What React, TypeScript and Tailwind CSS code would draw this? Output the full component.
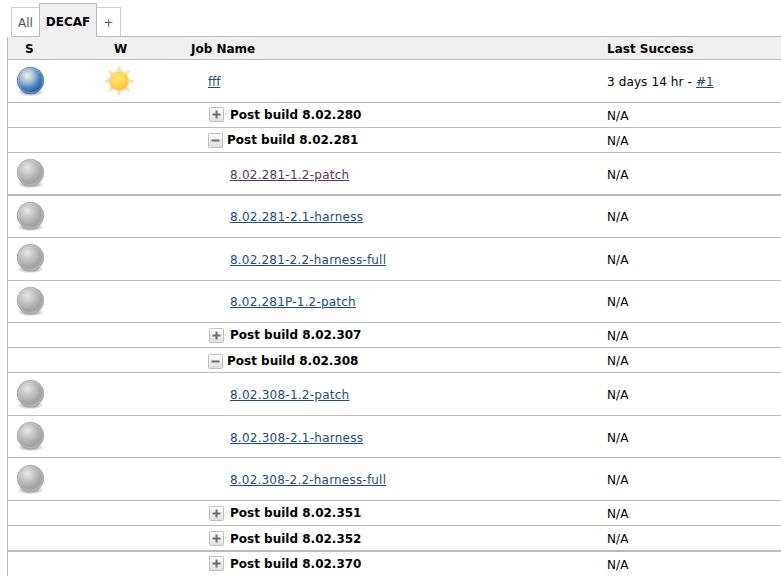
import React from "react";

type Row = {
  kind: "job" | "plus" | "minus";
  name: string;
  h: string;
  icon: string;
  label: string;
  last: string;
  track?: string;
  root?: boolean;
  visited?: boolean;
};

const rows: Row[] = [
  { kind: "job", name: "fff", h: "h-[43px] border-b", icon: "pt-[5px]", label: "pt-3.5", last: "pt-3.5", track: "-tracking-[0.1px]", root: true },
  { kind: "plus", name: "Post build 8.02.280", h: "h-[25px] border-b", icon: "pt-1", label: "pt-1", last: "pt-[5px]" },
  { kind: "minus", name: "Post build 8.02.281", h: "h-[25px] border-b", icon: "pt-[5px]", label: "pt-1", last: "pt-[5px]" },
  { kind: "job", name: "8.02.281-1.2-patch", h: "h-[43px] border-b-2", icon: "pt-1", label: "pt-3.5", last: "pt-3.5", visited: true },
  { kind: "job", name: "8.02.281-2.1-harness", h: "h-[42px] border-b", icon: "pt-1", label: "pt-[13px]", last: "pt-[13px]" },
  { kind: "job", name: "8.02.281-2.2-harness-full", h: "h-[43px] border-b", icon: "pt-1", label: "pt-3.5", last: "pt-3.5", track: "tracking-[0.2px]" },
  { kind: "job", name: "8.02.281P-1.2-patch", h: "h-[42px] border-b", icon: "pt-1", label: "pt-[13px]", last: "pt-[13px]", track: "tracking-[0.2px]" },
  { kind: "plus", name: "Post build 8.02.307", h: "h-[25px] border-b", icon: "pt-[5px]", label: "pt-1", last: "pt-[5px]" },
  { kind: "minus", name: "Post build 8.02.308", h: "h-[25px] border-b", icon: "pt-1.5", label: "pt-[5px]", last: "pt-[5px]" },
  { kind: "job", name: "8.02.308-1.2-patch", h: "h-[43px] border-b", icon: "pt-[5px]", label: "pt-3.5", last: "pt-3.5" },
  { kind: "job", name: "8.02.308-2.1-harness", h: "h-[42px] border-b", icon: "pt-1", label: "pt-3.5", last: "pt-3.5" },
  { kind: "job", name: "8.02.308-2.2-harness-full", h: "h-[43px] border-b", icon: "pt-[5px]", label: "pt-3.5", last: "pt-3.5", track: "tracking-[0.2px]" },
  { kind: "plus", name: "Post build 8.02.351", h: "h-[25px] border-b", icon: "pt-[5px]", label: "pt-1", last: "pt-[5px]" },
  { kind: "plus", name: "Post build 8.02.352", h: "h-[26px] border-b-2", icon: "pt-[5px]", label: "pt-[5px]", last: "pt-[5px]" },
  { kind: "plus", name: "Post build 8.02.370", h: "h-[25px]", icon: "pt-1", label: "pt-1", last: "pt-[5px]" },
];

function Gradients() {
  return (
    <svg width="0" height="0" className="absolute">
      <defs>
        <radialGradient id="blue" cx="0.38" cy="0.32" r="0.68">
          <stop offset="0" stopColor="#f0f4dc" />
          <stop offset="0.35" stopColor="#a9c3d9" />
          <stop offset="0.7" stopColor="#4a80bb" />
          <stop offset="1" stopColor="#2459a0" />
        </radialGradient>
        <radialGradient id="grey" cx="0.38" cy="0.32" r="0.68">
          <stop offset="0" stopColor="#e8e8e8" />
          <stop offset="0.4" stopColor="#c4c4c4" />
          <stop offset="0.8" stopColor="#a2a2a2" />
          <stop offset="1" stopColor="#a8a8a8" />
        </radialGradient>
        <radialGradient id="shade">
          <stop offset="0.4" stopColor="#777" stopOpacity="0.7" />
          <stop offset="1" stopColor="#999" stopOpacity="0" />
        </radialGradient>
        <radialGradient id="sun" cx="0.4" cy="0.35" r="0.7">
          <stop offset="0" stopColor="#ffe873" />
          <stop offset="0.6" stopColor="#ffd747" />
          <stop offset="1" stopColor="#fbb440" />
        </radialGradient>
        <linearGradient id="button" x1="0" y1="0" x2="0" y2="1">
          <stop offset="0" stopColor="#fff" />
          <stop offset="1" stopColor="#dedede" />
        </linearGradient>
      </defs>
    </svg>
  );
}

function Ball({ blue }: { blue?: boolean }) {
  return (
    <svg width="32" height="32" viewBox="0 0 32 32" className="block">
      <ellipse cx="16.5" cy="27.2" rx="13.5" ry="4.2" fill="url(#shade)" />
      <circle cx="16.5" cy="15.5" r="13.3" fill={blue ? "url(#blue)" : "url(#grey)"} stroke={blue ? "#5684b6" : "#a2a2a2"} strokeWidth="0.8" />
      <circle cx="16.5" cy="15.5" r="12.3" fill="none" stroke={blue ? "#a9c7e5" : "#cccccc"} strokeOpacity="0.6" strokeWidth="0.8" />
    </svg>
  );
}

const rays = [0, 45, 90, 135, 180, 225, 270, 315];

function Sun() {
  return (
    <svg width="32" height="32" viewBox="0 0 32 32" className="block">
      {rays.map((a) => (
        <path key={a} d="M16 0 L19.2 8.6 L12.8 8.6 Z" fill="#fbdfa6" transform={`rotate(${a} 16 16)`} />
      ))}
      <circle cx="16" cy="16" r="9.2" fill="url(#sun)" stroke="#f7c873" strokeWidth="0.9" />
    </svg>
  );
}

function Toggle({ plus }: { plus: boolean }) {
  return (
    <svg width="18" height="15" viewBox="0 0 18 15" className="block shrink-0">
      <rect x="0.5" y="0.5" width="14" height="14" rx="1" fill="url(#button)" stroke="#bfbfbf" />
      <path d="M3.5 7.5h8" stroke="#6c6c6c" strokeWidth="2" />
      {plus && <path d="M7.5 3.5v8" stroke="#6c6c6c" strokeWidth="2" />}
      {plus && <path d="M16 7h1" stroke="#b8cadb" />}
    </svg>
  );
}

function JobRow({ row }: { row: Row }) {
  const job = row.kind === "job";
  return (
    <div className={`flex shrink-0 items-start border-[#bbb] ${row.h}`}>
      <div className={`w-[84px] pl-1.5 ${row.icon}`}>{job && <Ball blue={row.root} />}</div>
      <div className="w-[99px] pl-[11px] pt-[5px]">{row.root && <Sun />}</div>
      <div className="flex w-[416px] items-start">
        {job ? (
          <div className={`${row.label} ${row.root ? "pl-[17px]" : "pl-[39px]"}`}>
            <a
              className={`underline underline-offset-1 ${row.track ?? "tracking-[0.24px]"} ${
                row.visited ? "text-[#5c3566]" : "text-[#204a87]"
              }`}
            >
              {row.name}
            </a>
          </div>
        ) : (
          <div className={`flex items-start ${row.kind === "plus" ? "gap-[3px] pl-[18px]" : "gap-px pl-[17px]"}`}>
            <div className={row.icon}>
              <Toggle plus={row.kind === "plus"} />
            </div>
            <b className={row.label}>{row.name}</b>
          </div>
        )}
      </div>
      <div className={row.last}>
        {row.root ? (
          <>
            <span className="tracking-[0.12px]">3 days 14 hr - </span>
            <a className="text-[#204a87] underline underline-offset-1">#1</a>
          </>
        ) : (
          <span className="tracking-[0.1px]">N/A</span>
        )}
      </div>
    </div>
  );
}

export default function App() {
  return (
    <div className="h-[576px] w-[781px] overflow-hidden bg-white pl-[7px] pt-[3px] font-['DejaVu_Sans',sans-serif] text-xs leading-4 text-black">
      <Gradients />
      <div className="flex h-[34px] items-end pl-1 text-[#555]">
        <div className="flex h-[30px] w-7 items-center justify-center border border-r-0 border-[#ccc] border-b-[#bbb] pt-px">All</div>
        <div className="flex h-[34px] w-[58px] items-center justify-center border border-b-0 border-[#bbb] bg-[#f0f0f0] pt-0.5 font-bold text-black">
          DECAF
        </div>
        <div className="flex h-[30px] w-6 items-center justify-center border border-l-0 border-[#ccc] border-b-[#bbb] pt-px">+</div>
        <div className="h-px flex-1 bg-[#bbb]" />
      </div>
      <div className="flex h-[540px] flex-col border-l border-[#bbb]">
        <div className="flex h-[23px] shrink-0 items-start border-b border-[#bbb] bg-[#f0f0f0] pt-1 font-bold">
          <div className="w-[84px] pl-[17px]">S</div>
          <div className="w-[99px] pl-[22px]">W</div>
          <div className="w-[416px]">Job Name</div>
          <div>Last Success</div>
        </div>
        {rows.map((row) => (
          <JobRow key={row.name} row={row} />
        ))}
      </div>
    </div>
  );
}
